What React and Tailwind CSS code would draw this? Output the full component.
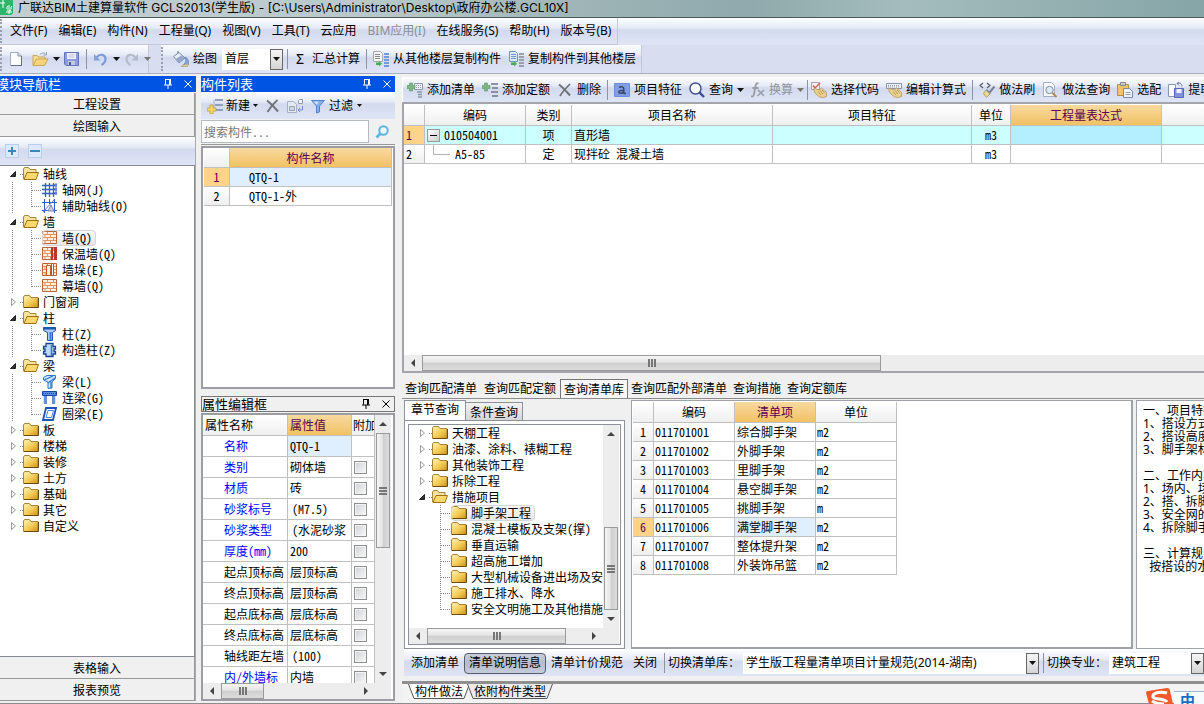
import React from "react";

/* ---------- icons ---------- */

const Svg = ({ w = 16, h = 16, children, className = "" }) => (
  <svg width={w} height={h} viewBox={`0 0 ${w} ${h}`} className={`shrink-0 ${className}`} fill="none" aria-hidden="true">
    {children}
  </svg>
);

const Caret = ({ color = "#111" }) => (
  <Svg w={7} h={4}><path d="M0 0h7L3.5 4z" fill={color} /></Svg>
);

const SmallCaret = () => (
  <Svg w={5} h={3}><path d="M0 0h5L2.5 3z" fill="#111" /></Svg>
);

const NewDoc = () => (
  <Svg w={12}>
    <path d="M.5 1.500h7.500l3.500 3.500v9.500h-11z" fill="#fbfcff" stroke="#a3aec8" />
    <path d="M8 1.500v3.500h3.500" fill="#d5dcf0" stroke="#8593b5" />
    <path d="M11.500 5v9.500H1" stroke="#5f6f98" />
  </Svg>
);

const OpenFile = () => (
  <Svg w={17}>
    <path d="M1 14V4.500h4l1.500 1.500H13v3" fill="#f6dc92" stroke="#c9a558" />
    <path d="M1 14.500 4.500 8H16l-3.500 6.500z" fill="#f8d479" stroke="#c9a558" />
    <path d="M8 3.500c2-2 4.500-2 6 0M14.500 1v3h-3" stroke="#8fa0b4" />
  </Svg>
);

const Save = () => (
  <Svg w={15}>
    <path d="M.5 1.500h14v13H2l-1.500-1.500z" fill="#8c9adf" stroke="#6572bd" />
    <path d="M3 2h9v6H3z" fill="#eef1fb" />
    <path d="M4 10h7v4H4z" fill="#c3cbe4" />
    <path d="M5 11h2v3H5z" fill="#4a5795" />
    <path d="M4.500 4h6M4.500 6h6" stroke="#b9c2e2" />
  </Svg>
);

const Undo = () => (
  <Svg w={13}>
    <path d="M2.500 6.500C6 2 11.500 3.500 11.500 8c0 3-1.500 4.500-4 6" stroke="#7b9cd8" strokeWidth="2.200" />
    <path d="M0 3v6.500h6.500z" fill="#7fa1dc" />
  </Svg>
);

const Redo = () => (
  <Svg w={13}>
    <path d="M10.500 6.500C7 2 1.500 3.500 1.500 8c0 3 1.500 4.500 4 6" stroke="#b3bccb" strokeWidth="2.200" />
    <path d="M13 3v6.500H6.500z" fill="#b3bccb" />
  </Svg>
);

const Bucket = () => (
  <Svg>
    <path d="M5 0v6" stroke="#5a6478" />
    <path d="m.5 5.500 5.500-4L12 7l-6 5z" fill="#e3ebf6" stroke="#7c89a3" />
    <path d="m2.500 8 6-3.500L12 7l-6 5z" fill="#94a7cb" />
    <path d="M12 6c3 1 4 4.500 3.500 7.500L10 15l3-5z" fill="#86a6dc" stroke="#5f7db3" strokeWidth=".7" />
    <path d="m10 14 5.500-1.500-1 3H8z" fill="#e0cd98" stroke="#9b8a5a" strokeWidth=".5" />
  </Svg>
);

const PageStack = ({ swap }) => (
  <Svg>
    {swap ? (
      <>
        <path d="M1.500.5h6l2 2v8h-8z" fill="#dce9fc" stroke="#6f93cd" />
        <path d="M3 3.500h5M3 5.500h5M3 7.500h5" stroke="#6f93cd" />
        <path d="M11 3h5M11 6h5M11 9h5M11 12h5M11 15h5" stroke="#9aa0ab" strokeWidth="2" />
      </>
    ) : (
      <>
        <path d="M.5.500h7l2 2v8h-9z" fill="#f4f4f4" stroke="#a8a8a8" />
        <path d="M2 3.500h5M2 5.500h5M2 7.500h5" stroke="#8a8a8a" />
        <path d="M11 3h5M11 6h5M11 9h5M11 12h5M11 15h5" stroke="#7399dc" strokeWidth="2" />
      </>
    )}
    <path d="M3 11.500h3v-1.500l3 2.800-3 2.700V14H3z" fill="#46ad5a" />
  </Svg>
);

const ListPlus = () => (
  <Svg>
    <path d="M8 2h8M8 7h8M8 12h8" stroke="#8fa1ba" strokeWidth="2" />
    <path d="M7 2v10" stroke="#a3b4cc" />
    <path d="M3 7h3v3h3v3H6v3H3v-3H0v-3h3z" fill="#f7d861" stroke="#bf9c38" strokeWidth=".8" />
  </Svg>
);

const Cross = () => (
  <Svg w={13} h={14}>
    <path d="M1 1.500c4 3 7 6.500 11 11" stroke="#6f7277" strokeWidth="2" />
    <path d="M11.500 1C8 4 4 8.500 1.500 13" stroke="#6f7277" strokeWidth="1.700" />
  </Svg>
);

const DocSync = () => (
  <Svg w={17}>
    <path d="M.5 3.500h6l3 3v8h-9z" fill="#e5e9f1" stroke="#a7afc0" />
    <path d="M2.500 8.500h5v4h-5z" stroke="#9aa4b9" fill="#cfd6e4" />
    <path d="M12.500 1.500h3v4h-4v-3z" fill="#f8f9fc" stroke="#8e9ab4" />
    <path d="M15.500 8v4h-4M13 10l-2 2 2 2" stroke="#6f8bdb" />
  </Svg>
);

const Funnel = () => (
  <Svg w={14}>
    <path d="M.5 2.500h13l-5 5.500v6l-3 1V8z" fill="#86aee8" stroke="#5482ca" />
    <path d="M2.500 3.500h5L6 7z" fill="#cfe1fb" />
  </Svg>
);

const AddList = () => (
  <Svg>
    <path d="M7.500 1.500h8v6h-8z" fill="#eef1f6" stroke="#8c96a8" />
    <path d="M9 3.500h5M9 5.500h5" stroke="#8c96a8" strokeDasharray="1 1" />
    <path d="M10 10h5M11 12.500h4M11 15h4" stroke="#8c96a8" strokeWidth="1.500" />
    <path d="M2.500 1h3v2.500H8v3H5.500V9h-3V6.500H0v-3h2.500z" fill="#7db585" stroke="#5c9a66" strokeWidth=".6" />
  </Svg>
);

const AddQuota = () => (
  <Svg>
    <path d="M9 2h7M10 6h6M9 10h7M10 14h6" stroke="#6d7686" strokeWidth="1.700" />
    <path d="M2.500 1h3v2.500H8v3H5.500V9h-3V6.500H0v-3h2.500z" fill="#7db585" stroke="#5c9a66" strokeWidth=".6" />
  </Svg>
);

const Feature = () => (
  <Svg>
    <path d="M.5 1.500h15v13H.5z" fill="#7f9fe2" stroke="#6d8fd8" />
    <path d="M5 5.500c2.500-1.300 4.800-.8 4.800 1.500v4.500M9.500 8.200c-3 0-4.700.4-4.700 1.800 0 1.800 3.500 1.800 4.700 0M9.500 11.500H12" stroke="#3a4466" strokeWidth="1.500" />
  </Svg>
);

const Lens = () => (
  <Svg>
    <circle cx="6.500" cy="6.500" r="5.500" fill="#fbfdff" stroke="#3d4a96" strokeWidth="1.400" />
    <path d="m10.500 10.500 4.500 4.500" stroke="#3d4a96" strokeWidth="2.400" />
  </Svg>
);

const Fx = () => (
  <Svg w={14}>
    <path d="M7.500 1.500c-2-1-2.800 1-3.300 4L3 12c-.5 2.500-1.500 3-3 2M1.500 6h6" stroke="#9a9da6" strokeWidth="1.800" />
    <path d="m7 8 6 6M13 8l-6.500 6" stroke="#9a9da6" strokeWidth="1.600" />
  </Svg>
);

const Hand = ({ keys }) => (
  <Svg>
    {keys ? (
      <>
        <path d="M.5 1.500h15v5H.5z" fill="#eef1f6" stroke="#8a93a5" />
        <path d="M2 3.500h12M2 5h12" stroke="#8a93a5" strokeDasharray="1 1" />
      </>
    ) : (
      <>
        <path d="M.5.500h8v7h-8z" fill="#f1eef1" stroke="#a9a4ab" />
        <path d="m2 3.500 2 2.500L9 1" stroke="#d3604f" strokeWidth="1.400" />
      </>
    )}
    <path d="m3 6 5 2 2.500-2 5 4.500v4l-3 1-4-.5L5 12 3 9z" fill="#ecd092" stroke="#b3955a" strokeWidth=".8" />
    <path d="m7 9.500 3 3.500M9 8.500l3 3.500M11 8l2.500 2.500" stroke="#a4843f" strokeWidth=".7" />
  </Svg>
);

const CodeBrush = () => (
  <Svg>
    <path d="M4 1 1 3.500 4 6M8 1l3 2.500L8 6" stroke="#555d6b" strokeWidth="1.200" />
    <path d="m15.500 4.500-5 6" stroke="#788097" strokeWidth="2" />
    <path d="m7 8 4 4-3.500 3.500-3-4z" fill="#ecd68e" stroke="#9a8646" strokeWidth=".7" />
    <path d="m7.500 7.500 4 4" stroke="#7d8aa8" strokeWidth="1.500" />
  </Svg>
);

const DocLens = () => (
  <Svg>
    <path d="M1.500.500h8l3 3v11h-11z" fill="#fafbfe" stroke="#a3adc3" />
    <circle cx="7.500" cy="8" r="3.700" fill="#d9ebf8" stroke="#7c889e" />
    <path d="m10.500 11 4 4" stroke="#b58a43" strokeWidth="2" />
  </Svg>
);

const Clip = () => (
  <Svg>
    <path d="M.5 2.500h11v11H.5z" fill="#edc468" stroke="#b3904a" />
    <path d="M3.500.500h5v3h-5z" fill="#c6c9d0" stroke="#868b95" />
    <path d="M6.500 6.500h6l3 3v6h-9z" fill="#eef2fa" stroke="#7888aa" />
    <path d="M8.500 10.500h5M8.500 12.500h5" stroke="#93a1bd" />
  </Svg>
);

const DocSave = () => (
  <Svg>
    <path d="M.5 2.500h7v12h-7z" fill="#fafbfe" stroke="#8b97b2" />
    <path d="M6.500 6.500h9v9h-9z" fill="#8192dc" stroke="#5867b5" />
    <path d="M8.500 7h5v4h-5z" fill="#eef1fb" />
    <path d="M9 1.500c3-1 5 0 5 3M11 0 9 1.500l2 2" stroke="#6c7893" />
  </Svg>
);

const Pin = () => (
  <Svg w={8} h={10}>
    <path d="M1.500 0v5.500M0 6h8M2 .5h4M5.500 0v6M6.500 0v5.500M4 6v4" stroke="currentColor" />
  </Svg>
);

const Close = () => (
  <Svg w={8} h={8}><path d="m.5.500 7 7M7.500.500l-7 7" stroke="currentColor" /></Svg>
);

const FolderClosed = () => (
  <Svg>
    <defs>
      <linearGradient id="fold" x1="0" y1="0" x2="1" y2="1">
        <stop offset="0" stopColor="#fff3b8" /><stop offset=".55" stopColor="#f3cb55" /><stop offset="1" stopColor="#cf9218" />
      </linearGradient>
    </defs>
    <path d="M.5 13.500V3l1-1.500h5L8 3.500h7v10z" fill="url(#fold)" stroke="#a98535" />
    <path d="M1 13.500h14.500V4" stroke="#6c4b0a" />
  </Svg>
);

const FolderOpen = () => (
  <Svg>
    <path d="M.5 13V3l1-1.500h4L7 3.500h6v3" fill="#f7e3a0" stroke="#a98535" />
    <path d="M1 13.500 4 6.500h11.500L13 13.500z" fill="#fbd96f" stroke="#a06f10" />
  </Svg>
);

const AxisGrid = ({ aux }) => (
  <Svg w={15}>
    {aux ? (
      <>
        <path d="M2.500 1v14M12.500 1v14M0 4.500h15M0 12.500h15M7.500 1v5" stroke="#2f63bf" />
        <path d="m1 14 11-12" stroke="#4c7fd3" />
        <path d="m6 13 3-6 3 6z" fill="#c9d3e4" stroke="#6f84a8" />
      </>
    ) : (
      <>
        <path d="M3.500 1v14M7.500 1v14M11.500 1v14M0 3.500h15M0 7.500h15M0 11.500h15" stroke="#2f63bf" strokeWidth="1.300" />
        <path d="M13 2h2v2h-2zM13 6h2v2h-2zM13 10h2v2h-2z" fill="#fff" stroke="#2f63bf" />
      </>
    )}
  </Svg>
);

const Brick = ({ kind }) => (
  <Svg w={15}>
    <path d="M.5 1.500h14v12H.5z" fill="#ffeede" stroke="#b9673a" />
    <path d="M1 4.500h13M1 7.500h13M1 10.500h13M5.500 2v2.500M11.500 2v2.500M3 4.500v3M8.500 4.500v3M5.500 7.500v3M11.500 7.500v3M3 10.500v3M8.500 10.500v3" stroke="#df9468" />
    {kind === "insulated" && <path d="M9 1h2v13H9zM12 1h3v13h-3z" fill="#b5362a" />}
    {kind === "pier" && <path d="M4.500 3.500h4v10h-4zM9.500 1.500h2v12h-2z" fill="#fffaf4" stroke="#c0562c" />}
  </Svg>
);

const Column = () => (
  <Svg w={15}>
    <path d="M1.500 1.500h12v3l-3 2v8h-5v-8l-4-2z" fill="#a9cdf6" stroke="#1d55b2" />
    <path d="M1 2.500h13" stroke="#1d55b2" strokeWidth="2" />
    <path d="M8.500 6v8" stroke="#3b78d1" strokeWidth="2" />
  </Svg>
);

const TieColumn = () => (
  <Svg w={15}>
    <path d="M4 1.500h7v3h2.500v2.500H12v2.500h1.500V12H11v2.500H4V12H1.500V9.500H3V7H1.500V4.500H4z" fill="#bcd9f8" stroke="#1b3f93" strokeWidth="1.300" />
    <path d="M9.500 3v11" stroke="#3f74cb" strokeWidth="1.500" />
  </Svg>
);

const Beam = () => (
  <Svg w={15}>
    <path d="M1.500 3.500 5 1.500h8.500v3L10 8v6l-4 .5V8L1.500 6z" fill="#cfe6fb" stroke="#2c78cc" />
    <path d="m2 6 9-4M6 9l7-5M9 8v6" stroke="#2c78cc" strokeWidth="1.300" />
  </Svg>
);

const LinkBeam = () => (
  <Svg w={15}>
    <path d="M.5 1.500h14v4H.5z" fill="#5b8fe0" stroke="#1848a5" />
    <path d="M1 3.500h13" stroke="#1848a5" strokeDasharray="1 1" />
    <path d="M3 6v8M12 6v8" stroke="#5d96e8" strokeWidth="2.500" />
    <path d="M4.500 6v8M10.500 6v8" stroke="#1848a5" strokeWidth=".6" />
  </Svg>
);

const RingBeam = () => (
  <Svg w={15}>
    <path d="M4 2h10l-3 12H1z" fill="#fff" stroke="#1e52b5" strokeWidth="1.800" />
    <path d="M6 4.500h5.500l-2 7H4z" stroke="#4b84dc" />
  </Svg>
);

/* ---------- shared parts ---------- */

const SONG = "font-['Noto_Sans_Mono_CJK_SC','Liberation_Mono','Noto_Sans_CJK_SC',monospace]";
const BAR = "bg-[linear-gradient(#fcfdff_0%,#e6ebf6_35%,#d3daee_45%,#dfe5f6_100%)]";
const HEAD = "bg-[linear-gradient(#ffffff,#efefef)]";
const GOLD = "bg-[linear-gradient(#f8d9a0,#f1c263)] text-[#5a0050]";

const Sep = ({ className = "" }) => <span className={`h-5 w-px shrink-0 bg-[#8d93a5] ${className}`} />;
const Grip = () => <span className="h-6 w-0 shrink-0 border-l-2 border-dotted border-[#9a9fb0]" />;

const ToolButton = ({ icon, label, caret, disabled }) => (
  <button type="button" disabled={disabled} aria-label={label} className="flex shrink-0 items-center gap-1 whitespace-nowrap disabled:text-[#8f939c]">
    {icon}
    {label}
    {caret && <Caret color={disabled ? "#777" : "#111"} />}
  </button>
);

const IconButton = ({ label, children, className = "" }) => (
  <button type="button" aria-label={label} className={`flex shrink-0 items-center ${className}`}>{children}</button>
);

const Dropdown = ({ label, value, className = "" }) => (
  <span className={`relative flex h-[21px] shrink-0 bg-white ${className}`}>
    <select aria-label={label} className="h-[21px] w-full appearance-none bg-white pl-[3px] pr-4 text-xs leading-5 outline-none" defaultValue={value}>
      <option>{value}</option>
    </select>
    <span className="pointer-events-none absolute inset-y-0 right-0 flex w-[13px] items-center justify-center border border-[#666] bg-[linear-gradient(#f5f5f5,#d4d4d4)]">
      <Caret />
    </span>
  </span>
);

const PanelTitle = ({ title, plain, cut }) => (
  <div className={`flex h-4 shrink-0 items-center overflow-hidden pr-1 text-[13px] leading-4 ${plain ? "border border-[#777] bg-[#f0f0f0] text-black" : "bg-[#0054e3] text-white"}`}>
    <h2 className={`flex-1 whitespace-nowrap ${cut ? "-ml-1" : ""}`}>{title}</h2>
    <IconButton label="固定" className="mr-3"><Pin /></IconButton>
    <IconButton label="关闭"><Close /></IconButton>
  </div>
);

const Arrow = ({ dir, className = "" }) => {
  const d = { up: "M0 6l4-4 4 4z", down: "M0 2h8L4 6z", left: "M6 0v8L2 4z", right: "M2 0l4 4-4 4z" }[dir];
  return <Svg w={8} h={8} className={className}><path d={d} fill="#444" /></Svg>;
};

const HScroll = ({ thumb, pad = "", open }) => (
  <div className={`flex h-4 shrink-0 items-center bg-[#ededed] ${pad}`}>
    <span className="flex w-[18px] justify-center"><Arrow dir="left" /></span>
    <span className="flex h-full min-w-0 flex-1">
      <span className={`flex h-full items-center justify-center gap-px border border-[#9a9a9a] bg-[linear-gradient(#f5f5f5,#e4e4e4_45%,#cfcfcf_50%,#dcdcdc)] ${thumb}`}>
        <i className="h-2 w-0.5 bg-[#777]" /><i className="h-2 w-0.5 bg-[#777]" /><i className="h-2 w-0.5 bg-[#777]" />
      </span>
    </span>
    {!open && <span className="flex w-[18px] justify-center"><Arrow dir="right" /></span>}
  </div>
);

const VScroll = ({ thumb, end }) => (
  <div className="flex w-4 shrink-0 flex-col items-center bg-[#ededed]">
    <span className="flex h-[18px] items-center"><Arrow dir="up" /></span>
    <span className={`flex min-h-0 w-full flex-1 flex-col px-px ${end ? "justify-end" : ""}`}>
      <span className={`flex w-full flex-col items-center justify-center gap-px border border-[#9a9a9a] bg-[linear-gradient(90deg,#f5f5f5,#e4e4e4_45%,#cfcfcf_50%,#dcdcdc)] ${thumb}`}>
        <i className="h-0.5 w-2 bg-[#777]" /><i className="h-0.5 w-2 bg-[#777]" /><i className="h-0.5 w-2 bg-[#777]" />
      </span>
    </span>
    <span className="flex h-[18px] items-center"><Arrow dir="down" /></span>
  </div>
);

/* ---------- tree ---------- */

const Tree = ({ nodes, rail }) => (
  <ul className={`text-xs leading-4 ${SONG}`}>
    {nodes.map((n) => (
      <li key={n.label}>
        <div className="flex h-4 items-center whitespace-nowrap">
          <Svg w={23}>
            {n.children
              ? <path d="M10.500 10.500h5v-5z" fill="#333" stroke="#222" />
              : <path d="M11.500 4.500v7l4-3.500z" fill="#fff" stroke="#9a9a9a" />}
            <path d="M20 8.500h3" stroke="#888" strokeDasharray="1 1" />
          </Svg>
          {n.children ? <FolderOpen /> : <FolderClosed />}
          <span className="ml-1">{n.label}</span>
        </div>
        {n.children && (
          <ul>
            {n.children.map((c, i) => (
              <li key={c.label} className="flex h-4 items-center whitespace-nowrap">
                <Svg w={42}>
                  {rail && <path d="M12.500 0v16" stroke="#888" strokeDasharray="1 1" />}
                  <path d={i === n.children.length - 1 ? "M31.500 0v9" : "M31.500 0v16"} stroke="#888" strokeDasharray="1 1" />
                  <path d="M32 8.500h10" stroke="#888" strokeDasharray="1 1" />
                </Svg>
                <button type="button" className={`flex h-4 items-center rounded-sm pr-1 ${c.icon ? "gap-[5px]" : "gap-1"} ${c.selected ? "bg-[linear-gradient(#fafafa,#e6e6e6)] outline outline-1 -outline-offset-1 outline-[#d6d6d6]" : ""}`}>
                  {c.icon || <FolderClosed />}
                  {c.label}
                </button>
              </li>
            ))}
          </ul>
        )}
      </li>
    ))}
  </ul>
);

const navNodes = [
  { label: "轴线", children: [{ label: "轴网(J)", icon: <AxisGrid /> }, { label: "辅助轴线(O)", icon: <AxisGrid aux /> }] },
  {
    label: "墙",
    children: [
      { label: "墙(Q)", icon: <Brick />, selected: true },
      { label: "保温墙(Q)", icon: <Brick kind="insulated" /> },
      { label: "墙垛(E)", icon: <Brick kind="pier" /> },
      { label: "幕墙(Q)", icon: <Brick /> },
    ],
  },
  { label: "门窗洞" },
  { label: "柱", children: [{ label: "柱(Z)", icon: <Column /> }, { label: "构造柱(Z)", icon: <TieColumn /> }] },
  {
    label: "梁",
    children: [
      { label: "梁(L)", icon: <Beam /> },
      { label: "连梁(G)", icon: <LinkBeam /> },
      { label: "圈梁(E)", icon: <RingBeam /> },
    ],
  },
  { label: "板" }, { label: "楼梯" }, { label: "装修" }, { label: "土方" }, { label: "基础" }, { label: "其它" }, { label: "自定义" },
];

const chapterNodes = [
  { label: "天棚工程" }, { label: "油漆、涂料、裱糊工程" }, { label: "其他装饰工程" }, { label: "拆除工程" },
  {
    label: "措施项目",
    children: [
      { label: "脚手架工程", selected: true }, { label: "混凝土模板及支架(撑)" }, { label: "垂直运输" }, { label: "超高施工增加" },
      { label: "大型机械设备进出场及安拆" }, { label: "施工排水、降水" }, { label: "安全文明施工及其他措施项目" },
    ],
  },
];

/* ---------- header ---------- */

const menus = ["文件(F)", "编辑(E)", "构件(N)", "工程量(Q)", "视图(V)", "工具(T)", "云应用", "BIM应用(I)", "在线服务(S)", "帮助(H)", "版本号(B)"];

const TitleBar = () => (
  <header className="flex h-[18px] shrink-0 items-start gap-[5px] border-b border-[#4c5a5c] bg-[linear-gradient(90deg,#c3cfd2_0%,#b9c9cb_30%,#9fb5b8_48%,#8fa9ac_62%,#a4bcbd_75%,#86a5a7_100%)]">
    <svg width="13" height="15" viewBox="0 0 13 15" aria-hidden="true">
      <path d="M0 0h13v13l-2 2H0z" fill="#2db56b" />
      <path d="M0 3h5M3 0v8M6 8h6M7 6l1 1M9 5v2M12 6l-1 1M7 10h4l-2 1v3M6 12h6" stroke="#fff" fill="none" />
    </svg>
    <h1 className="whitespace-nowrap font-['Inter','Noto_Sans_CJK_SC',sans-serif] text-xs leading-[15px]">广联达BIM土建算量软件 GCLS2013(学生版) - [C:\Users\Administrator\Desktop\政府办公楼.GCL10X]</h1>
  </header>
);

const MenuBar = () => (
  <nav className={`h-[27px] shrink-0 ${BAR}`}>
    <div className="flex h-full w-fit items-center gap-[11px] border-b border-r border-[#c4c8d4] pr-1.5">
      <span className="-mr-[3px] flex"><Grip /></span>
      {menus.map((m) => (
        <button key={m} type="button" disabled={m.startsWith("BIM")} className="whitespace-nowrap disabled:text-[#8a8d94]">{m}</button>
      ))}
    </div>
  </nav>
);

const MainToolbar = () => (
  <div className="flex h-[29px] shrink-0 items-stretch border-b border-[#a9adbf] bg-[#d8def0]">
    <div className={`flex w-[149px] items-center border-r border-[#c4c8d4] ${BAR}`}>
      <Grip />
      <IconButton label="新建" className="ml-2"><NewDoc /></IconButton>
      <IconButton label="打开" className="ml-2.5 gap-1"><OpenFile /><Caret /></IconButton>
      <IconButton label="保存" className="ml-1"><Save /></IconButton>
      <Sep className="mx-[7px]" />
      <IconButton label="撤销" className="gap-1.5"><Undo /><Caret /></IconButton>
      <IconButton label="重做" className="ml-[5px] gap-1.5"><Redo /><Caret color="#777" /></IconButton>
    </div>
    <div className={`ml-3 flex items-center whitespace-nowrap border-r border-[#c4c8d4] pr-[5px] ${BAR}`}>
      <Grip />
      <span className="ml-2.5 flex"><ToolButton icon={<Bucket />} label="绘图" /></span>
      <Dropdown label="楼层" value="首层" className="ml-[5px] w-[61px]" />
      <Sep className="ml-1" />
      <button type="button" className="ml-2 flex items-center gap-2"><span className="text-sm leading-4">Σ</span>汇总计算</button>
      <Sep className="mx-1.5" />
      <ToolButton icon={<PageStack />} label="从其他楼层复制构件" />
      <span className="w-[7px]" />
      <ToolButton icon={<PageStack swap />} label="复制构件到其他楼层" />
    </div>
  </div>
);

/* ---------- navigation ---------- */

const NavButton = ({ children }) => (
  <button type="button" className={`h-[22px] shrink-0 border-b border-r border-[#999] bg-[#f0f0f0] text-xs leading-5 ${SONG}`}>{children}</button>
);

const Navigation = () => (
  <aside className="flex w-[196px] shrink-0 flex-col">
    <PanelTitle title="模块导航栏" cut />
    <div className="mt-px flex min-h-0 flex-1 flex-col border-r border-[#aaa]">
      <NavButton>工程设置</NavButton>
      <NavButton>绘图输入</NavButton>
      <div className={`flex h-7 shrink-0 items-center gap-[9px] pl-[5px] ${BAR}`}>
        <IconButton label="展开" className="h-3.5 w-3.5 justify-center border border-[#b9cdec] bg-[#dce9fb]">
          <Svg w={10} h={10}><path d="M5 1v8M1 5h8" stroke="#3c86bd" strokeWidth="2" /></Svg>
        </IconButton>
        <IconButton label="折叠" className="h-3.5 w-3.5 justify-center border border-[#b9cdec] bg-[#dce9fb]">
          <Svg w={10} h={10}><path d="M0 5h10" stroke="#3c86bd" strokeWidth="2" /></Svg>
        </IconButton>
      </div>
      <div className="min-h-0 flex-1 overflow-hidden border-y border-r border-[#868a94] bg-white">
        <Tree nodes={navNodes} rail />
      </div>
      <NavButton>表格输入</NavButton>
      <NavButton>报表预览</NavButton>
    </div>
  </aside>
);

/* ---------- component list + properties ---------- */

const cell = "overflow-hidden whitespace-nowrap border-b border-r border-[#c0c0c0] p-0 font-normal";

const ComponentList = () => (
  <section className="flex min-h-0 flex-1 flex-col">
    <PanelTitle title="构件列表" />
    <div className={`flex h-[27px] shrink-0 items-center pl-1.5 ${BAR}`}>
      <button type="button" className="flex items-center gap-[3px]"><ListPlus />新建<SmallCaret /></button>
      <IconButton label="删除" className="ml-2"><Cross /></IconButton>
      <IconButton label="复制" className="ml-2"><DocSync /></IconButton>
      <button type="button" className="ml-[7px] flex items-center gap-1"><Funnel />过滤<SmallCaret /></button>
    </div>
    <div className="flex h-[26px] shrink-0 items-center gap-1.5 border-b border-[#999] py-px pr-1.5">
      <input type="text" aria-label="搜索构件" placeholder="搜索构件..." className={`h-[23px] min-w-0 flex-1 border border-[#b6bac4] bg-white pl-0.5 text-xs outline-none placeholder:text-[#777] ${SONG}`} />
      <IconButton label="搜索">
        <Svg w={14} h={14}><circle cx="8.500" cy="5.500" r="4.200" fill="#eef8fe" stroke="#5eb4e2" strokeWidth="2" /><path d="m5.500 8.500-4 4" stroke="#5eb4e2" strokeWidth="2.600" /></Svg>
      </IconButton>
    </div>
    <div className={`mt-px min-h-0 flex-1 overflow-hidden border-2 border-[#9b9da3] bg-white px-px ${SONG}`}>
      <table className="w-full table-fixed border-separate border-spacing-0 text-xs leading-4">
        <colgroup><col className="w-[26px]" /><col /></colgroup>
        <thead>
          <tr className="h-5"><th className={`${cell} ${HEAD}`} /><th className={`${cell} ${GOLD}`}>构件名称</th></tr>
        </thead>
        <tbody>
          <tr className="h-[19px]"><td className={`${cell} bg-[#ffd48a] text-center text-[#5a0050]`}>1</td><td className={`${cell} bg-[#dfefff] pl-[19px]`}>QTQ-1</td></tr>
          <tr className="h-[19px]"><td className={`${cell} ${HEAD} text-center`}>2</td><td className={`${cell} pl-[19px]`}>QTQ-1-外</td></tr>
        </tbody>
      </table>
    </div>
  </section>
);

const props = [
  ["名称", "QTQ-1", true], ["类别", "砌体墙", true], ["材质", "砖", true], ["砂浆标号", "(M7.5)", true], ["砂浆类型", "(水泥砂浆", true],
  ["厚度(mm)", "200", true], ["起点顶标高", "层顶标高"], ["终点顶标高", "层顶标高"], ["起点底标高", "层底标高"], ["终点底标高", "层底标高"],
  ["轴线距左墙", "(100)"], ["内/外墙标", "内墙", true],
];

const Properties = () => (
  <section className="mt-[7px] flex h-[305px] shrink-0 flex-col">
    <PanelTitle title="属性编辑框" plain />
    <div className={`mt-px flex min-h-0 flex-1 flex-col border-2 border-[#9b9da3] bg-white pr-0.5 ${SONG}`}>
      <div className="flex min-h-0 flex-1">
        <div className="min-w-0 flex-1 overflow-hidden">
          <table className="w-full table-fixed border-separate border-spacing-0 text-xs leading-4">
            <colgroup><col className="w-[85px]" /><col className="w-16" /><col /></colgroup>
            <thead>
              <tr className="h-[21px] text-left">
                <th className={`${cell} ${HEAD} pl-0.5`}>属性名称</th>
                <th className={`${cell} ${GOLD} pl-0.5`}>属性值</th>
                <th className={`${cell} ${HEAD} pl-px`}>附加</th>
              </tr>
            </thead>
            <tbody>
              {props.map(([name, value, blue], i) => (
                <tr key={name} className="h-[21px]">
                  <td className={`${cell} pl-[21px] ${blue ? "text-[#0000ff]" : ""}`}>{name}</td>
                  <td className={`${cell} ${value[0] === "(" ? "pl-1" : "pl-0.5"} ${i === 0 ? "bg-[#dfefff]" : ""}`}>{value}</td>
                  <td className={`${cell} pl-0.5`}>
                    {i > 0 && <input type="checkbox" aria-label={`附加 ${name}`} className="block h-[13px] w-[13px] appearance-none border border-[#8e8f8f] bg-[linear-gradient(135deg,#cfd2d6,#f8f8f8)] shadow-[inset_0_0_0_1px_#f4f4f4]" />}
                  </td>
                </tr>
              ))}
            </tbody>
          </table>
        </div>
        <VScroll thumb="h-[115px]" />
      </div>
      <HScroll thumb="w-[43px]" pad="pr-4" />
    </div>
  </section>
);

/* ---------- bill grid ---------- */

const GridToolbar = () => (
  <div className={`mt-[3px] flex h-[25px] shrink-0 items-center gap-[7px] overflow-hidden border-l border-white pl-1 ${BAR}`}>
    <ToolButton icon={<AddList />} label="添加清单" />
    <ToolButton icon={<AddQuota />} label="添加定额" />
    <ToolButton icon={<Svg><g transform="translate(1 1)"><path d="M1 1.500c4 3 7 6.500 11 11" stroke="#6f7277" strokeWidth="2" /><path d="M12 1C9 4 4.500 8.500 2 13" stroke="#6f7277" strokeWidth="1.700" /></g></Svg>} label="删除" />
    <Sep className="-mx-px" />
    <ToolButton icon={<Feature />} label="项目特征" />
    <ToolButton icon={<Lens />} label="查询" caret />
    <ToolButton icon={<Fx />} label="换算" caret disabled />
    <Sep className="-mx-1" />
    <ToolButton icon={<Hand />} label="选择代码" />
    <ToolButton icon={<Hand keys />} label="编辑计算式" />
    <Sep className="-mx-px" />
    <ToolButton icon={<CodeBrush />} label="做法刷" />
    <ToolButton icon={<DocLens />} label="做法查询" />
    <ToolButton icon={<Clip />} label="选配" />
    <ToolButton icon={<DocSave />} label="提取做法" />
  </div>
);

const BillGrid = () => (
  <section className="flex min-h-0 flex-1 flex-col border-y-2 border-l-2 border-[#a3a5ab] bg-white">
    <div className={`min-h-0 flex-1 overflow-hidden pt-px ${SONG}`}>
      <table className="w-full table-fixed border-separate border-spacing-0 text-center text-xs leading-4">
        <colgroup>
          <col className="w-[21px]" /><col className="w-[101px]" /><col className="w-[46px]" /><col className="w-[201px]" />
          <col className="w-[199px]" /><col className="w-[39px]" /><col className="w-[151px]" /><col />
        </colgroup>
        <thead>
          <tr className="h-[21px]">
            {["", "编码", "类别", "项目名称", "项目特征", "单位", "工程量表达式"].map((h, i) => (
              <th key={i} className={`${cell} ${i === 6 ? GOLD : HEAD}`}>{h}</th>
            ))}
            <th className={`border-b border-[#c0c0c0] ${HEAD}`} />
          </tr>
        </thead>
        <tbody>
          <tr className="h-[19px] bg-[#ccffff]">
            <td className={`${cell} bg-[#ffd48a] pl-0.5 text-left text-[#5a0050]`}>1</td>
            <td className={cell}>
              <span className="flex h-[18px] items-center gap-1 pl-0.5">
                <button type="button" aria-label="折叠" className="flex h-[13px] w-[13px] items-center justify-center border border-[#999] bg-[linear-gradient(135deg,#fff,#ccc)]"><i className="h-px w-[7px] bg-black" /></button>
                010504001
              </span>
            </td>
            <td className={cell}>项</td>
            <td className={`${cell} pl-0.5 text-left`}>直形墙</td>
            <td className={cell} />
            <td className={cell}>m3</td>
            <td className={`${cell} bg-[#b3efff]`} />
            <td className="border-b border-[#c0c0c0]" />
          </tr>
          <tr className="h-[19px]">
            <td className={`${cell} ${HEAD} pl-0.5 text-left`}>2</td>
            <td className={cell}>
              <span className="flex h-[18px] items-start gap-[5px] pl-2 leading-[18px]"><i className="h-2.5 w-[17px] border-b border-l border-[#b4b4b4]" />A5-85</span>
            </td>
            <td className={cell}>定</td>
            <td className={`${cell} pl-0.5 text-left`}>现拌砼 混凝土墙</td>
            <td className={cell} />
            <td className={cell}>m3</td>
            <td className={cell} />
            <td className="border-b border-[#c0c0c0]" />
          </tr>
        </tbody>
      </table>
    </div>
    <HScroll thumb="w-[459px]" open />
  </section>
);

/* ---------- query area ---------- */

const QueryTabs = () => (
  <div role="tablist" className={`mt-1 flex h-[22px] shrink-0 items-center border-b border-[#8c8c8c] text-xs leading-4 ${SONG}`}>
    {["查询匹配清单", "查询匹配定额", "查询清单库", "查询匹配外部清单", "查询措施", "查询定额库"].map((t, i) => (
      <button key={t} type="button" role="tab" aria-selected={i === 2}
        className={i === 2 ? "h-[19px] self-end whitespace-nowrap border border-b-0 border-[#777] bg-[#f6f6f6] px-[3px]" : `whitespace-nowrap px-[3px] ${i < 2 ? "mr-px" : ""}`}>{t}</button>
    ))}
  </div>
);

const ChapterPane = () => (
  <div className={`flex w-[223px] shrink-0 flex-col pl-0.5 ${SONG}`}>
    <div role="tablist" className="flex h-5 items-end text-xs">
      <button type="button" role="tab" aria-selected="true" className="h-5 border-x border-t border-[#8d919b] bg-white px-1.5 pb-[3px] leading-4">章节查询</button>
      <button type="button" role="tab" aria-selected="false" className="h-[18px] border-r border-t border-[#8d919b] bg-[linear-gradient(#f2f2f2,#d6d6d6)] px-1 leading-4">条件查询</button>
    </div>
    <div className="flex min-h-0 flex-1 flex-col border border-[#8d919b] bg-white p-[3px]">
      <div className="flex min-h-0 flex-1 flex-col border border-[#8d919b] pr-px">
        <div className="flex min-h-0 flex-1">
          <div className="min-w-0 flex-1 overflow-hidden"><Tree nodes={chapterNodes} /></div>
          <VScroll thumb="h-[83px]" end />
        </div>
        <HScroll thumb="w-[139px]" pad="pr-4" />
      </div>
    </div>
  </div>
);

const items = ["综合脚手架", "外脚手架", "里脚手架", "悬空脚手架", "挑脚手架", "满堂脚手架", "整体提升架", "外装饰吊篮"];

const ItemPane = () => (
  <div className={`ml-[6px] min-w-0 flex-1 overflow-hidden border-b-2 border-l border-r-2 border-t border-[#a0a2aa] bg-white pl-px pt-px ${SONG}`}>
    <table className="w-[264px] table-fixed border-separate border-spacing-0 text-xs leading-4">
      <colgroup><col className="w-[21px]" /><col className="w-[81px]" /><col className="w-[81px]" /><col className="w-[81px]" /></colgroup>
      <thead>
        <tr className="h-[21px]">
          <th className={`${cell} ${HEAD}`} /><th className={`${cell} ${HEAD}`}>编码</th><th className={`${cell} ${GOLD}`}>清单项</th><th className={`${cell} ${HEAD}`}>单位</th>
        </tr>
      </thead>
      <tbody>
        {items.map((name, i) => (
          <tr key={name} className="h-[19px]">
            <td className={`${cell} text-center ${i === 5 ? "bg-[#ffd48a] text-[#5a0050]" : HEAD}`}>{i + 1}</td>
            <td className={`${cell} pl-px`}>{`01170100${i + 1}`}</td>
            <td className={`${cell} pl-0.5 ${i === 5 ? "bg-[#dfefff]" : ""}`}>{name}</td>
            <td className={`${cell} pl-px`}>{i === 4 ? "m" : "m2"}</td>
          </tr>
        ))}
      </tbody>
    </table>
  </div>
);

const notes = ["一、项目特征", "1、搭设方式", "2、搭设高度", "3、脚手架材质", "", "二、工作内容", "1、场内、场外材料搬运", "2、搭、拆脚手架", "3、安全网的铺设", "4、拆除脚手架后材料的堆放", "", "三、计算规则", "  按搭设的水平投影面积计算"];

const NotePane = () => (
  <div className="ml-[3px] w-[68px] shrink-0 overflow-hidden border-y border-l border-[#a0a2aa] bg-white pl-1.5 pt-[3px] font-['Noto_Sans','Noto_Sans_CJK_SC',sans-serif] text-xs leading-[13px]">
    {notes.map((n, i) => <p key={i} className="h-[13px] whitespace-pre">{n}</p>)}
  </div>
);

const BottomBar = () => (
  <div className={`ml-0.5 flex h-[27px] shrink-0 items-center overflow-hidden whitespace-nowrap border-t border-white pl-[7px] ${BAR}`}>
    <button type="button">添加清单</button>
    <button type="button" aria-pressed="true" className="ml-[5px] h-[21px] rounded-sm border border-[#555b6b] bg-[linear-gradient(#c9ced9,#b4bbcb_50%,#c5ccdc)] px-1 leading-[18px]">清单说明信息</button>
    <button type="button" className="ml-[5px]">清单计价规范</button>
    <button type="button" className="ml-2.5">关闭</button>
    <Sep className="ml-[7px] mr-[3px]" />
    <span>切换清单库：</span>
    <Dropdown label="切换清单库" value="学生版工程量清单项目计量规范(2014-湖南)" className="ml-[3px] min-w-0 flex-1 shrink" />
    <Sep className="ml-1 mr-[3px]" />
    <span>切换专业：</span>
    <Dropdown label="切换专业" value="建筑工程" className="ml-0.5 w-[95px]" />
  </div>
);

const SheetTab = ({ label, active }) => (
  <button type="button" role="tab" aria-selected={active} className="flex h-[15px] items-stretch">
    <Svg w={7} h={15}><path d="M0 0l6 14h1V0z" fill={active ? "#fff" : "#ececec"} /><path d="M.5 0 6 14.500h1" stroke="#555" /></Svg>
    <span className={`border-b border-[#555] text-xs leading-[14px] ${active ? "bg-white" : "bg-[#ececec]"}`}>{label}</span>
    <Svg w={7} h={15}><path d="M7 0 1 14H0V0z" fill={active ? "#fff" : "#ececec"} /><path d="M6.500 0 1 14.500H0" stroke="#555" /></Svg>
  </button>
);

const SheetTabs = () => (
  <div className={`flex h-[22px] shrink-0 items-start border-t-[3px] border-[#8f8f8f] bg-[#f3f3f3] pl-1.5 ${SONG}`} role="tablist">
    <SheetTab label="构件做法" active />
    <span className="-ml-[3px] flex"><SheetTab label="依附构件类型" /></span>
  </div>
);

const InputMethod = () => (
  <div className="absolute bottom-0 right-0 flex h-4 w-[58px] items-start overflow-hidden">
    <Svg w={28} h={16}>
      <path d="M0 5Q0 3 2 3L21 0q3 0 3 3l3 13H3z" fill="#f0592a" />
      <path d="M21 5C14 3 6 5 7 9c1 3 12 1 14 5M6 13c3 2 8 3 12 3" stroke="#fff" strokeWidth="3" />
    </Svg>
    <span className="mt-[3px] h-[13px] flex-1 border-t border-[#9fb6cc] bg-[#f8fbfe] pl-1.5 text-[15px] font-bold leading-[17px] text-[#1a6fc4]">中</span>
  </div>
);

export default function App() {
  return (
    <div className="relative flex h-screen flex-col overflow-hidden bg-[#f0f0f0] font-['Noto_Sans','Noto_Sans_CJK_SC',sans-serif] text-xs leading-4 text-black">
      <TitleBar />
      <MenuBar />
      <MainToolbar />
      <main className="flex min-h-0 flex-1 border-b border-[#8c8c8c]">
        <div className="flex pb-0.5 pt-0.5"><Navigation /></div>
        <div className="ml-[5px] flex w-[194px] shrink-0 flex-col pb-0.5 pt-0.5">
          <ComponentList />
          <Properties />
        </div>
        <div className="ml-[7px] flex min-w-0 flex-1 flex-col">
          <GridToolbar />
          <BillGrid />
          <QueryTabs />
          <div className="mt-px flex h-[249px] shrink-0">
            <ChapterPane />
            <ItemPane />
            <NotePane />
          </div>
          <BottomBar />
          <div className="h-[5px] shrink-0" />
          <SheetTabs />
        </div>
      </main>
      <InputMethod />
    </div>
  );
}
